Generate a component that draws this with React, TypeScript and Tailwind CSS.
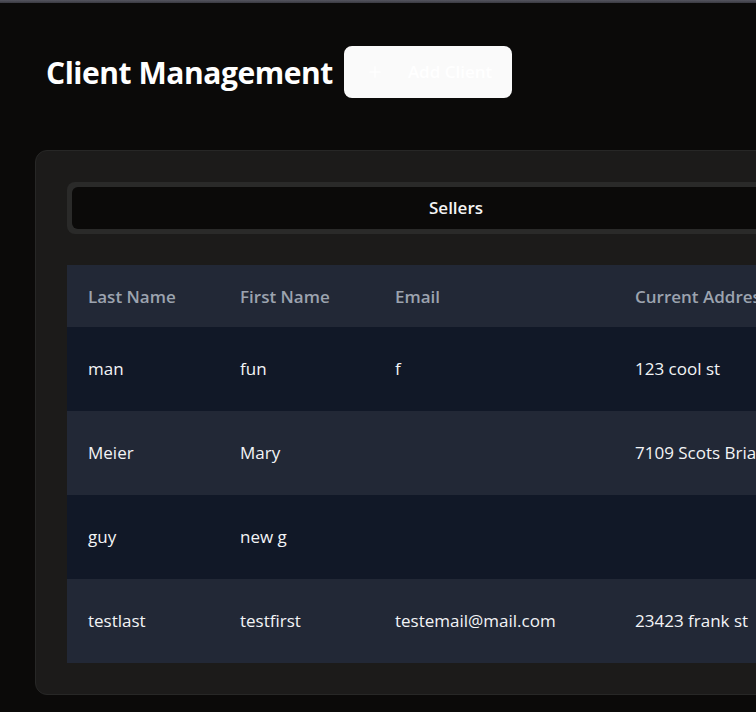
import { Plus } from 'lucide-react';

type Client = {
  lastName: string;
  firstName: string;
  email: string;
  address: string;
};

const clients: Client[] = [
  { lastName: 'man', firstName: 'fun', email: 'f', address: '123 cool st' },
  { lastName: 'Meier', firstName: 'Mary', email: '', address: '7109 Scots Briar Ln' },
  { lastName: 'guy', firstName: 'new g', email: '', address: '' },
  { lastName: 'testlast', firstName: 'testfirst', email: 'testemail@mail.com', address: '23423 frank st' },
];

export default function App() {
  return (
    <div
      className="min-h-screen w-full overflow-hidden bg-[#0b0a09] text-white"
      style={{ fontFamily: '"Open Sans", "Noto Sans", sans-serif' }}
    >
      <div className="h-[3px] w-full bg-gradient-to-b from-[#55555f] to-[#3a3a42]" />

      <div className="pl-[46px] pt-[43px] flex items-center gap-[11px]">
        <h1 className="text-[30px] font-bold tracking-[-0.45px] text-white">Client Management</h1>
        <button className="h-[52px] pl-[22px] pr-[20px] rounded-lg bg-[#fafafa] text-white flex items-center gap-[24px] text-[17px] font-semibold">
          <Plus size={18} strokeWidth={1.5} />
          Add Client
        </button>
      </div>

      <div className="ml-[35px] mt-[52px] w-[842px] rounded-xl border border-[#272726] bg-[#1c1b1a] p-[31px]">
        <div className="rounded-lg bg-[#2a2a29] p-[5px]">
          <div className="h-[42px] rounded-md bg-[#0b0a09] flex items-center justify-center text-[17px] font-semibold text-[#f5f5f5]">
            Sellers
          </div>
        </div>

        <table className="mt-[31px] w-full border-collapse text-left text-[17px]">
          <thead>
            <tr className="h-[62px] bg-[#222836]">
              <th className="w-[152px] pl-[21px] pt-px font-semibold text-[#9ca3af]">Last Name</th>
              <th className="w-[155px] pl-[21px] pt-px font-semibold text-[#9ca3af]">First Name</th>
              <th className="w-[240px] pl-[21px] pt-px font-semibold text-[#9ca3af]">Email</th>
              <th className="pl-[21px] pt-px font-semibold text-[#9ca3af] whitespace-nowrap">Current Address</th>
            </tr>
          </thead>
          <tbody>
            {clients.map((c, i) => (
              <tr key={i} className={i % 2 === 0 ? 'h-[84px] bg-[#111827]' : 'h-[84px] bg-[#222836]'}>
                <td className="pl-[21px] text-[#f3f4f6]">{c.lastName}</td>
                <td className="pl-[21px] text-[#f3f4f6]">{c.firstName}</td>
                <td className="pl-[21px] text-[#f3f4f6]">{c.email}</td>
                <td className="pl-[21px] text-[#f3f4f6] whitespace-nowrap">{c.address}</td>
              </tr>
            ))}
          </tbody>
        </table>
      </div>
    </div>
  );
}
